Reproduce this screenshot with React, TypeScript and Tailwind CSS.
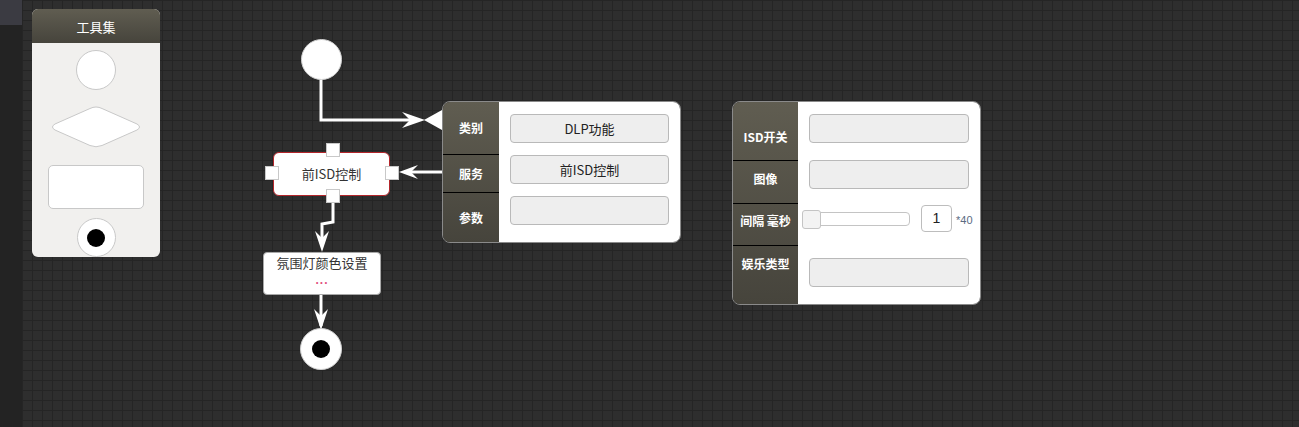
import React from "react"

const cjk = "font-['Noto_Sans_CJK_SC','Noto_Sans',sans-serif]"
const darkHead = "bg-[linear-gradient(180deg,#605d51,#46443c)]"

function Port({ className }: { className: string }) {
  return <div className={`absolute w-[14px] h-[14px] bg-white border border-[#c8c8c8] ${className}`} />
}

function Field({ text, className = "" }: { text?: string; className?: string }) {
  return (
    <div
      className={`h-[29px] rounded-[4px] border border-[#b9b9b9] bg-[#eeeeee] flex items-center justify-center text-[13px] text-[#222] ${className}`}
    >
      {text}
    </div>
  )
}

function Toolbox() {
  return (
    <div className={`absolute left-[32px] top-[9px] w-[128px] h-[248px] rounded-[6px] overflow-hidden bg-[#f1f0ee] flex flex-col ${cjk}`}>
      <div className={`${darkHead} h-[35px] pt-[2px] flex items-center justify-center text-white text-[13px]`}>工具集</div>
      <div className="flex flex-col items-center">
        <div className="mt-[7px] w-[40px] h-[40px] rounded-full bg-white border border-[#c8c8c8]" />
        <svg width="94" height="42" viewBox="0 0 94 42" className="mt-[16px]">
          <path d="M47 1 Q50 1 53 2.5 L88 18 Q93 21 88 24 L53 39.5 Q47 42 41 39.5 L6 24 Q1 21 6 18 L41 2.5 Q44 1 47 1 Z" fill="#fff" stroke="#c8c8c8" strokeWidth="1" />
        </svg>
        <div className="mt-[17px] w-[96px] h-[44px] rounded-[5px] bg-white border border-[#c8c8c8]" />
        <div className="mt-[9px] w-[39px] h-[39px] rounded-full bg-white border border-[#c8c8c8] flex items-center justify-center">
          <div className="w-[18px] h-[18px] rounded-full bg-black" />
        </div>
      </div>
    </div>
  )
}

function Connectors() {
  return (
    <svg className="absolute left-0 top-0" width="1299" height="427" viewBox="0 0 1299 427">
      <g fill="none" stroke="#fff" strokeWidth="3">
        <path d="M321 78 V120 H418" />
        <path d="M442 172 H404" />
        <path d="M333 203 V222 L322 224 V246" />
        <path d="M321 295 V326" />
      </g>
      <g fill="#fff">
        <polygon points="425,120 402,112 410,120 402,128" />
        <polygon points="424,120 442,110 442,130" />
        <polygon points="399,172 418,165 411,172 418,179" />
        <polygon points="322,252 315,231 322,238 329,231" />
        <polygon points="321,330 314,309 321,316 328,309" />
      </g>
    </svg>
  )
}

function Diagram() {
  return (
    <>
      <div className="absolute left-[301px] top-[39px] w-[41px] h-[41px] rounded-full bg-white border border-[#d0d0d0]" />

      <div className={`absolute left-[273px] top-[152px] w-[117px] h-[44px] rounded-[6px] bg-white border-[1.5px] border-[#b3262b] flex items-center justify-center text-[13px] text-[#333] ${cjk}`}>
        前ISD控制
      </div>
      <Port className="left-[326px] top-[143px]" />
      <Port className="left-[265px] top-[166px]" />
      <Port className="left-[385px] top-[166px]" />
      <Port className="left-[326px] top-[189px]" />

      <div className={`absolute left-[263px] top-[252px] w-[118px] h-[43px] rounded-[4px] bg-white border-[1.5px] border-[#a8a8a8] flex flex-col items-center ${cjk}`}>
        <div className="text-[13px] text-[#333] leading-[20px]">氛围灯颜色设置</div>
        <div className="mt-[1px] text-[12px] font-bold text-[#e2507e] leading-[12px] tracking-[1px] font-['Liberation_Sans',sans-serif]">...</div>
      </div>

      <div className="absolute left-[300px] top-[328px] w-[42px] h-[42px] rounded-full bg-white border border-[#d0d0d0] flex items-center justify-center">
        <div className="w-[18px] h-[18px] rounded-full bg-black" />
      </div>
    </>
  )
}

function ServicePanel() {
  return (
    <div className={`absolute left-[442px] top-[101px] w-[239px] h-[142px] rounded-[8px] overflow-hidden border border-[#8a8a8a] flex ${cjk}`}>
      <div className={`${darkHead} w-[56px] flex flex-col text-white text-[12px] font-bold`}>
        <div className="h-[53px] flex items-center justify-center border-b border-black">类别</div>
        <div className="h-[38px] flex items-center justify-center border-b border-black">服务</div>
        <div className="flex-1 flex items-center justify-center">参数</div>
      </div>
      <div className="flex-1 bg-white px-[11px] pt-[12px] flex flex-col gap-[12px]">
        <Field text="DLP功能" />
        <Field text="前ISD控制" />
        <Field />
      </div>
    </div>
  )
}

function IsdPanel() {
  return (
    <div className={`absolute left-[732px] top-[101px] w-[249px] h-[204px] rounded-[8px] overflow-hidden border border-[#8a8a8a] flex ${cjk}`}>
      <div className={`${darkHead} w-[65px] flex flex-col text-white text-[12px] font-bold`}>
        <div className="h-[59px] flex justify-center pt-[26px] border-b border-black">ISD开关</div>
        <div className="h-[43px] flex justify-center pt-[9px] border-b border-black">图像</div>
        <div className="h-[42px] flex justify-center pt-[8px] border-b border-black">间隔 毫秒</div>
        <div className="flex-1 flex justify-center pt-[9px]">娱乐类型</div>
      </div>
      <div className="flex-1 bg-white flex flex-col">
        <Field className="mt-[12px] mx-[11px]" />
        <Field className="mt-[17px] mx-[11px]" />
        <div className="mt-[16px] h-[27px] flex items-center pl-[4px]">
          <div className="relative w-[108px] h-[14px] rounded-[4px] border border-[#c4c4c4] bg-white">
            <div className="absolute left-[-1px] top-[-3px] w-[19px] h-[19px] rounded-[3px] border border-[#c4c4c4] bg-[#f3f3f3]" />
          </div>
          <div className="ml-[11px] w-[31px] h-[27px] rounded-[4px] border border-[#bdbdbd] flex items-center justify-center text-[14px] text-[#222] font-['Liberation_Sans',sans-serif]">
            1
          </div>
          <div className="ml-[4px] mt-[4px] text-[11px] text-[#5b6b82] font-['Liberation_Sans',sans-serif]">*40</div>
        </div>
        <Field className="mt-[26px] mx-[11px]" />
      </div>
    </div>
  )
}

export default function App() {
  return (
    <div className="relative w-[1299px] h-[427px] flex overflow-hidden bg-[#2e2e2e]">
      <div className="w-[22px] h-full bg-[#232323] flex flex-col">
        <div className="h-[25px] bg-[#3b3b42]" />
      </div>
      <div className="flex-1 h-full bg-[#2e2e2e] bg-[linear-gradient(#252525_1px,transparent_1px),linear-gradient(90deg,#252525_1px,transparent_1px)] bg-[size:10px_10px]" />
      <Connectors />
      <Toolbox />
      <Diagram />
      <ServicePanel />
      <IsdPanel />
    </div>
  )
}
